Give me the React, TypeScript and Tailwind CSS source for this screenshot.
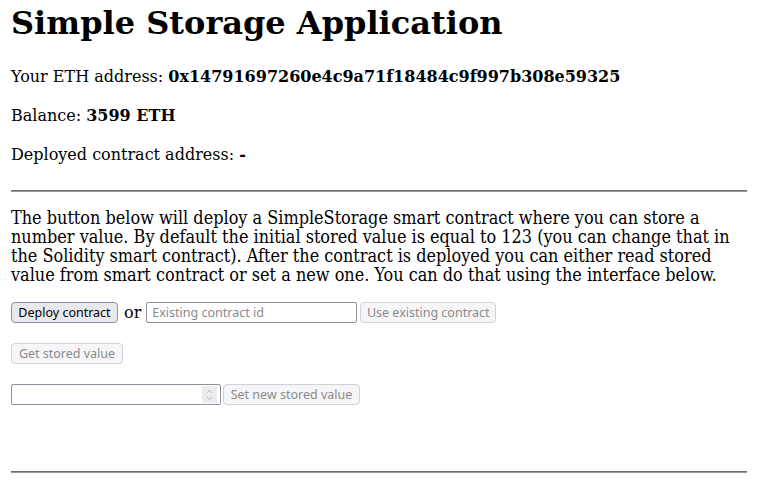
import { ChevronUp, ChevronDown } from "lucide-react"

const serif = "font-['DejaVu_Serif','Liberation_Serif',serif]"
const btn =
    "flex h-[21px] shrink-0 items-center justify-center whitespace-nowrap rounded-[4px] border font-['Noto_Sans','Open_Sans',sans-serif] text-[12.5px] leading-[17px]"
const off = "border-[#d2d2d8] bg-[#f6f6f8] text-[#8a8a8a]"

export default function App() {
    return (
        <div className={`min-h-[482px] bg-white pl-[11px] pr-[13px] text-black ${serif}`}>
            <h1 className="pt-[5px] text-[32px] font-bold leading-[37px]">Simple Storage Application</h1>

            <div className="mt-[25px] flex flex-col gap-[20px] text-[16px] leading-[19px]">
                <p>
                    Your ETH address: <b>0x14791697260e4c9a71f18484c9f997b308e59325</b>
                </p>
                <p>
                    Balance: <b>3599 ETH</b>
                </p>
                <p>
                    Deployed contract address: <b>-</b>
                </p>
            </div>

            <hr className="mt-[26px] border-t border-b border-t-[#6e6e6e] border-b-[#9a9a9a]" />

            {/* condensed face of DejaVu Serif */}
            <p className="mt-[16px] text-[17.9px] leading-[19px] font-stretch-condensed">
                The button below will deploy a SimpleStorage smart contract where you can store a number value. By
                default the initial stored value is equal to 123 (you can change that in the Solidity smart contract).
                After the contract is deployed you can either read stored value from smart contract or set a new one.
                You can do that using the interface below.
            </p>

            {/* Deploy / existing contract */}
            <div className="mt-[18px] flex items-center">
                <button className={`${btn} w-[107px] border-[#8f8f9d] bg-[#e9e9ed] text-black`}>Deploy contract</button>
                <span className="ml-[6px] mr-[5px] text-[16px] leading-[21px]">or</span>
                <input
                    className="h-[21px] w-[211px] rounded-[2px] border border-[#8f8f9d] px-[5px] font-['Noto_Sans','Open_Sans',sans-serif] text-[12.5px] outline-none placeholder:text-[#8a8a8a]"
                    placeholder="Existing contract id"
                />
                <button disabled className={`${btn} ml-[3px] w-[136px] ${off}`}>
                    Use existing contract
                </button>
            </div>

            <div className="mt-[20px] flex">
                <button disabled className={`${btn} w-[112px] ${off}`}>
                    Get stored value
                </button>
            </div>

            {/* Set value */}
            <div className="mt-[20px] flex items-center">
                <div className="flex h-[21px] w-[210px] items-center justify-end rounded-[2px] border border-[#8f8f9d] pr-[3px]">
                    <div className="flex h-[17px] w-[15px] flex-col items-center justify-center bg-[#ececef] text-[#8a8a8a]">
                        <ChevronUp size={9} strokeWidth={1.5} className="-mb-[1px]" />
                        <ChevronDown size={9} strokeWidth={1.5} className="-mt-[1px]" />
                    </div>
                </div>
                <button disabled className={`${btn} ml-[2px] w-[137px] ${off}`}>
                    Set new stored value
                </button>
            </div>

            <hr className="mt-[66px] border-t border-b border-t-[#6e6e6e] border-b-[#9a9a9a]" />
        </div>
    )
}
